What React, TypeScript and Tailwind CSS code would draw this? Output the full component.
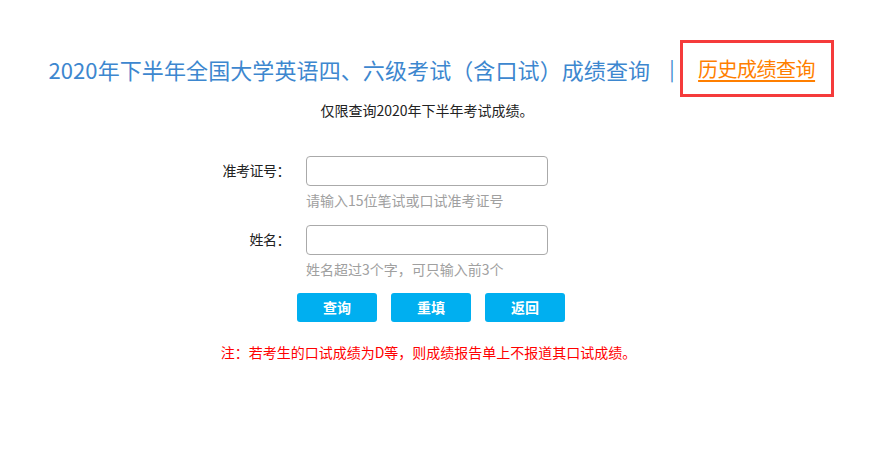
import { useState } from 'react'

const font = { fontFamily: '"Noto Sans CJK SC", "Liberation Sans", sans-serif' }

function Field({ label, hint, value, onChange }: { label: string; hint: string; value: string; onChange: (v: string) => void }) {
  return (
    <div className="grid grid-cols-[100px_1fr] gap-x-[16px]">
      <label className="text-right text-[14px] text-[#222] leading-[29px] tracking-[-0.5px]">{label}</label>
      <input
        value={value}
        onChange={e => onChange(e.target.value)}
        className="w-[242px] h-[30px] rounded-[4px] border border-[#aaaaaa] px-2 text-[14px] outline-none"
      />
      <div />
      <div className="text-[14px] text-[#a0a0a0] leading-[28px]">{hint}</div>
    </div>
  )
}

export default function App() {
  const [ticket, setTicket] = useState('')
  const [name, setName] = useState('')

  return (
    <div className="w-[882px] h-[458px] bg-white" style={font}>
      {/* header */}
      <div className="flex items-center justify-center pt-[40px]">
        <h1 className="text-[22px] text-[#3d87cf] font-normal whitespace-nowrap leading-none tracking-[0.1px]">
          2020年下半年全国大学英语四、六级考试（含口试）成绩查询
        </h1>
        <span className="ml-[19px] mr-[5px] text-[20px] text-[#3d87cf] leading-none">|</span>
        <div className="border-[3px] border-[#f53b3b] w-[154px] h-[57px] flex items-center justify-center">
          <a href="#" className="text-[20px] text-[#ff7f00] underline underline-offset-[3px] whitespace-nowrap tracking-[-0.5px]">
            历史成绩查询
          </a>
        </div>
      </div>

      <div className="w-[854px]">
        <p className="text-center text-[14px] text-[#222] mt-[3px] leading-[20px]">仅限查询2020年下半年考试成绩。</p>

        <div className="ml-[190px] mt-[36px] flex flex-col gap-[11px]">
          <Field label="准考证号：" hint="请输入15位笔试或口试准考证号" value={ticket} onChange={setTicket} />
          <Field label="姓名：" hint="姓名超过3个字，可只输入前3个" value={name} onChange={setName} />
        </div>

        <div className="flex justify-center gap-[14px] mt-[10px] pl-[8px]">
          <button className="w-[80px] h-[29px] rounded-[3px] bg-[#00aff0] text-white text-[14px] font-bold">查询</button>
          <button
            onClick={() => { setTicket(''); setName('') }}
            className="w-[80px] h-[29px] rounded-[3px] bg-[#00aff0] text-white text-[14px] font-bold"
          >
            重填
          </button>
          <button className="w-[80px] h-[29px] rounded-[3px] bg-[#00aff0] text-white text-[14px] font-bold">返回</button>
        </div>

        <p className="text-center text-[14px] text-[#ff0000] mt-[20px] leading-[20px] pl-[3px]">
          注：若考生的口试成绩为D等，则成绩报告单上不报道其口试成绩。
        </p>
      </div>
    </div>
  )
}
